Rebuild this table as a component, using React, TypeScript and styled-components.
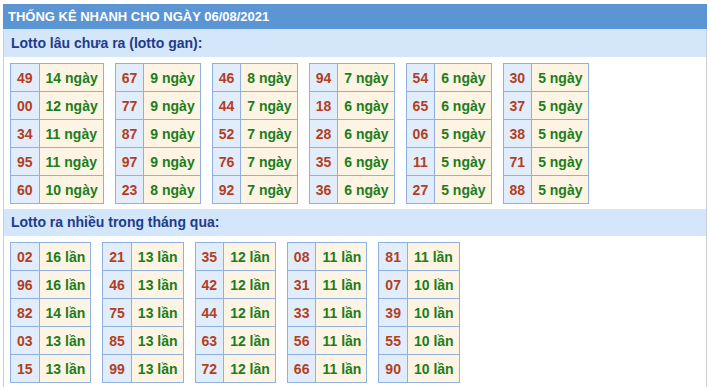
import React from "react";
import styled, { createGlobalStyle } from "styled-components";

const Global = createGlobalStyle`
  html, body { margin: 0; padding: 0; background: #ffffff; }
  body { font-family: Arial, "Liberation Sans", Helvetica, sans-serif; }
`;

const Frame = styled.div`
  margin: 4px 4px 0 3px;
  border-left: 1px solid #c9ced8;
  border-right: 1px solid #c9ced8;
  height: 383px;
  box-sizing: border-box;
  display: flex;
  flex-direction: column;
`;

const Title = styled.div`
  height: 25px;
  background: #5b95d3;
  color: #ffffff;
  font-weight: bold;
  font-size: 13px;
  line-height: 25px;
  padding-left: 5px;
  margin-left: -1px;
  margin-right: -1px;
`;

const SubTitle = styled.div<{ $h: number }>`
  height: ${(p) => p.$h}px;
  line-height: ${(p) => p.$h}px;
  background: #d3e6fa;
  color: #1f3b8c;
  font-weight: bold;
  font-size: 14px;
  padding-left: 7px;
`;

const TableRow = styled.div<{ $gap: number }>`
  display: flex;
  align-items: flex-start;
  gap: ${(p) => p.$gap}px;
  padding: 6px 6px 5px;
`;

const Table = styled.table`
  border-collapse: collapse;
  font-size: 14px;
  font-weight: bold;
`;

const NumCell = styled.td`
  height: 27px;
  padding: 0 6px;
  background: #e2edfb;
  color: #b23f1f;
  border: 1px solid #90b0df;
  text-align: center;
`;

const ValCell = styled.td`
  height: 27px;
  padding: 0 5px 0 6px;
  background: #fdf4e4;
  color: #1c7d1c;
  border: 1px solid #90b0df;
  white-space: nowrap;
`;

type Pair = [string, string];

const gan: Pair[][] = [
  [["49", "14"], ["00", "12"], ["34", "11"], ["95", "11"], ["60", "10"]],
  [["67", "9"], ["77", "9"], ["87", "9"], ["97", "9"], ["23", "8"]],
  [["46", "8"], ["44", "7"], ["52", "7"], ["76", "7"], ["92", "7"]],
  [["94", "7"], ["18", "6"], ["28", "6"], ["35", "6"], ["36", "6"]],
  [["54", "6"], ["65", "6"], ["06", "5"], ["11", "5"], ["27", "5"]],
  [["30", "5"], ["37", "5"], ["38", "5"], ["71", "5"], ["88", "5"]],
];

const nhieu: Pair[][] = [
  [["02", "16"], ["96", "16"], ["82", "14"], ["03", "13"], ["15", "13"]],
  [["21", "13"], ["46", "13"], ["75", "13"], ["85", "13"], ["99", "13"]],
  [["35", "12"], ["42", "12"], ["44", "12"], ["63", "12"], ["72", "12"]],
  [["08", "11"], ["31", "11"], ["33", "11"], ["56", "11"], ["66", "11"]],
  [["81", "11"], ["07", "10"], ["39", "10"], ["55", "10"], ["90", "10"]],
];

const StatTable = ({ rows, unit }: { rows: Pair[]; unit: string }) => (
  <Table>
    <tbody>
      {rows.map(([n, v], i) => (
        <tr key={i}>
          <NumCell>{n}</NumCell>
          <ValCell>
            {v} {unit}
          </ValCell>
        </tr>
      ))}
    </tbody>
  </Table>
);

export default function App() {
  return (
    <>
      <Global />
      <Frame>
        <Title>THỐNG KÊ NHANH CHO NGÀY 06/08/2021</Title>
        <SubTitle $h={28}>Lotto lâu chưa ra (lotto gan):</SubTitle>
        <TableRow $gap={11}>
          {gan.map((t, i) => (
            <StatTable key={i} rows={t} unit="ngày" />
          ))}
        </TableRow>
        <SubTitle $h={27}>Lotto ra nhiều trong tháng qua:</SubTitle>
        <TableRow $gap={11}>
          {nhieu.map((t, i) => (
            <StatTable key={i} rows={t} unit="lần" />
          ))}
        </TableRow>
      </Frame>
    </>
  );
}
